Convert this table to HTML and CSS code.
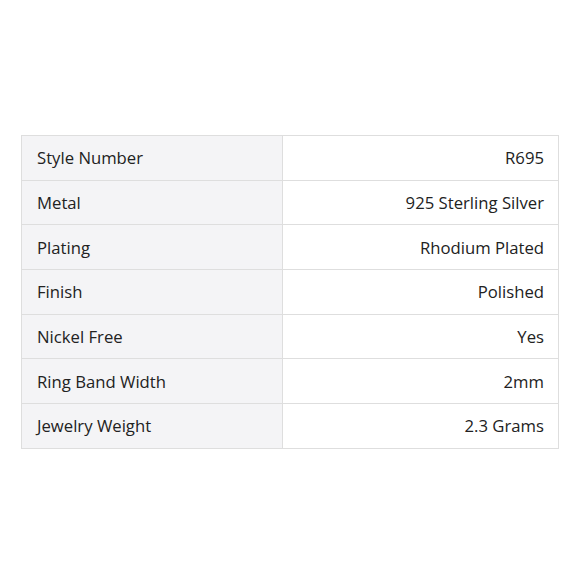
FILE: index.html
```html
<!DOCTYPE html>
<html>
<head>
<meta charset="utf-8">
<link rel="stylesheet" href="styles.css">
</head>
<body>
<main class="page">
<table class="specs">
<tbody>
<tr><td class="label">Style Number</td><td class="value">R695</td></tr>
<tr><td class="label">Metal</td><td class="value">925 Sterling Silver</td></tr>
<tr><td class="label">Plating</td><td class="value">Rhodium Plated</td></tr>
<tr><td class="label">Finish</td><td class="value">Polished</td></tr>
<tr><td class="label">Nickel Free</td><td class="value">Yes</td></tr>
<tr><td class="label">Ring Band Width</td><td class="value">2mm</td></tr>
<tr><td class="label">Jewelry Weight</td><td class="value">2.3 Grams</td></tr>
</tbody>
</table>
</main>
</body>
</html>
```
FILE: styles.css
```css
html, body {
  margin: 0;
  padding: 0;
  background: #ffffff;
}
.page {
  box-sizing: border-box;
  width: 580px;
  height: 580px;
  padding: 135px 21px 0 21px;
  font-family: "Open Sans", "Noto Sans", sans-serif;
}
.specs {
  width: 538px;
  border-collapse: collapse;
  table-layout: fixed;
  border: 1px solid #dedede;
}
.specs td {
  border: 1px solid #dedede;
  height: 44.7px;
  padding: 0 14px 0 15px;
  font-size: 16.7px;
  color: #222222;
  box-sizing: border-box;
}
.specs .label {
  width: 261px;
  background: #f4f4f6;
  text-align: left;
}
.specs .value {
  text-align: right;
  background: #ffffff;
}
```
